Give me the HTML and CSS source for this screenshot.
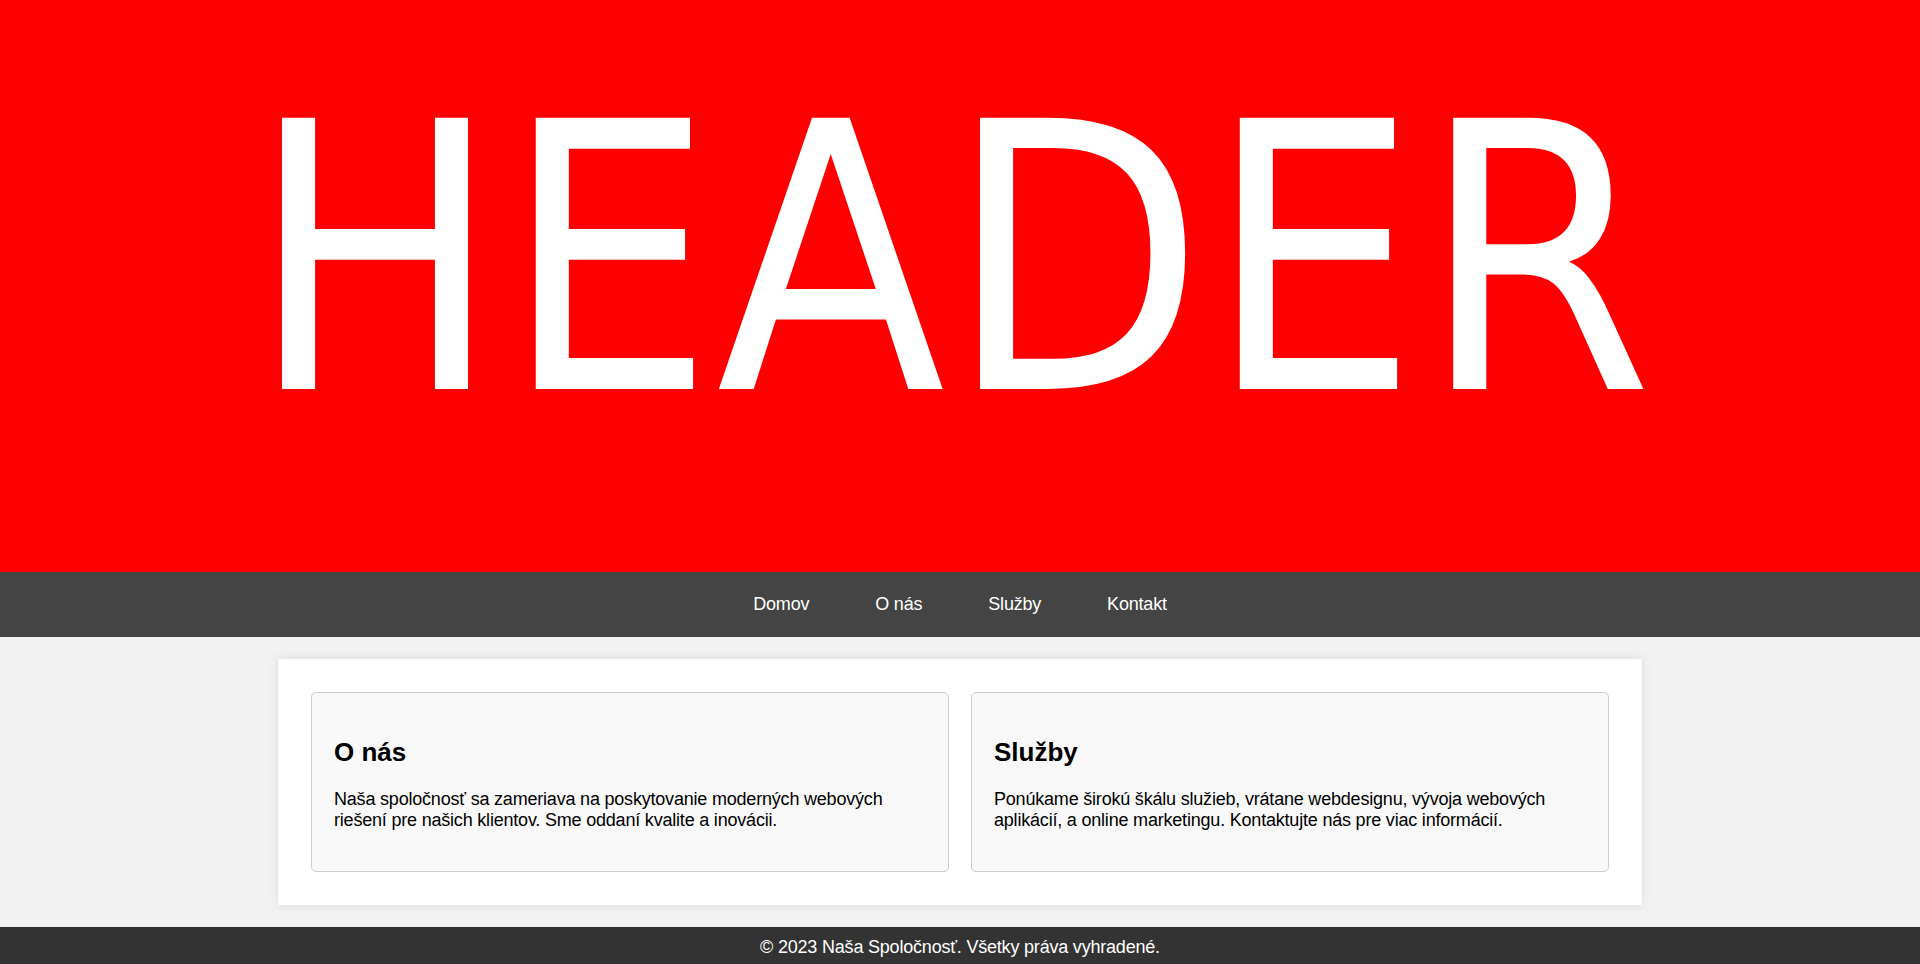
FILE: index.html
```html
<!DOCTYPE html>
<html lang="sk">
<head>
<meta charset="utf-8">
<title>Naša Spoločnosť</title>
<link rel="stylesheet" href="styles.css">
</head>
<body>
<header class="site-header">
  <h1 class="site-title">HEADER</h1>
</header>
<nav class="site-nav">
  <a href="#" class="nav-link">Domov</a>
  <a href="#" class="nav-link">O nás</a>
  <a href="#" class="nav-link">Služby</a>
  <a href="#" class="nav-link">Kontakt</a>
</nav>
<main class="site-main">
  <div class="container">
    <section class="card">
      <h2 class="card-title">O nás</h2>
      <p class="card-text">Naša spoločnosť sa zameriava na poskytovanie moderných webových riešení pre našich klientov. Sme oddaní kvalite a inovácii.</p>
    </section>
    <section class="card">
      <h2 class="card-title">Služby</h2>
      <p class="card-text">Ponúkame širokú škálu služieb, vrátane webdesignu, vývoja webových aplikácií, a online marketingu. Kontaktujte nás pre viac informácií.</p>
    </section>
  </div>
</main>
<footer class="site-footer">
  <p class="footer-text">© 2023 Naša Spoločnosť. Všetky práva vyhradené.</p>
</footer>
</body>
</html>
```

FILE: styles.css
```css
* { box-sizing: border-box; }
html, body { margin: 0; padding: 0; }
body {
  font-family: "Liberation Sans", Arial, sans-serif;
  font-size: 18px;
  letter-spacing: -0.2px;
  background: #f2f2f2;
  color: #000;
}
.site-header {
  background: #ff0000;
  height: 572px;
  padding-top: 75px;
  text-align: center;
  overflow: hidden;
}
.site-title {
  margin: 0;
  padding-right: 16px;
  font-family: "DejaVu Sans Condensed", "DejaVu Sans", sans-serif;
  font-stretch: semi-condensed;
  font-weight: 400;
  font-size: 372px;
  line-height: 372px;
  letter-spacing: 2px;
  color: #fff;
}
.site-nav {
  background: #444;
  height: 65px;
  display: flex;
  justify-content: center;
  align-items: center;
  gap: 66px;
}
.nav-link {
  color: #fff;
  text-decoration: none;
  font-size: 18px;
}
.site-main {
  padding: 22px 0;
}
.container {
  max-width: 1364px;
  margin: 0 auto;
  background: #fff;
  padding: 33px;
  display: flex;
  gap: 22px;
  box-shadow: 0 0 10px rgba(0,0,0,0.1);
}
.card {
  flex: 1;
  background: #f8f8f8;
  border: 1px solid #ccc;
  border-radius: 5px;
  padding: 22px;
}
.card-title {
  font-size: 26px;
  letter-spacing: 0;
  margin: 21.6px 0;
}
.card-text {
  margin: 18px 0;
  line-height: normal;
}
.site-footer {
  background: #333;
  color: #fff;
  text-align: center;
  padding: 10px 0 15px;
}
.footer-text {
  margin: 0;
}
```
